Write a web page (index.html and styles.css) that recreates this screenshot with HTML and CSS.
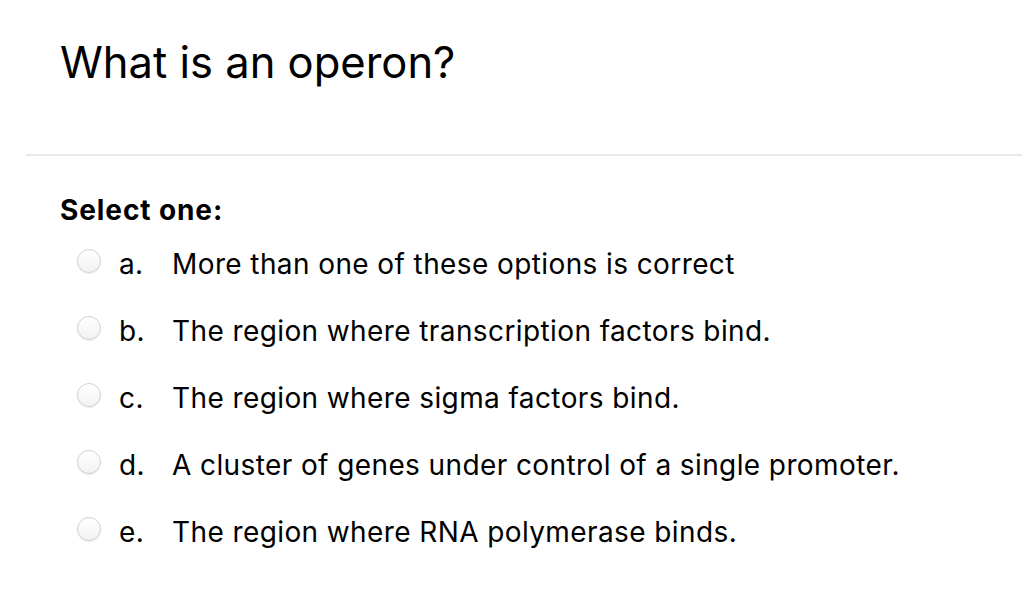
FILE: index.html
```html
<!DOCTYPE html>
<html>
<head>
<meta charset="utf-8">
<link rel="stylesheet" href="styles.css">
</head>
<body>
<div class="page">
  <h1 class="question">What is an operon?</h1>
  <div class="divider"></div>
  <div class="answers">
    <div class="prompt">Select one:</div>
    <div class="options">
      <label class="option"><span class="radio"></span><span class="letter">a.</span><span class="text">More than one of these options is correct</span></label>
      <label class="option"><span class="radio"></span><span class="letter">b.</span><span class="text">The region where transcription factors bind.</span></label>
      <label class="option"><span class="radio"></span><span class="letter">c.</span><span class="text">The region where sigma factors bind.</span></label>
      <label class="option"><span class="radio"></span><span class="letter">d.</span><span class="text">A cluster of genes under control of a single promoter.</span></label>
      <label class="option"><span class="radio"></span><span class="letter">e.</span><span class="text">The region where RNA polymerase binds.</span></label>
    </div>
  </div>
</div>
</body>
</html>
```

FILE: styles.css
```css
html, body {
  margin: 0;
  padding: 0;
  background: #ffffff;
}
.page {
  font-family: Inter, "Liberation Sans", sans-serif;
  color: #000000;
  display: flex;
  flex-direction: column;
}
.question {
  margin: 0;
  padding: 37px 0 0 60px;
  height: 116px;
  box-sizing: border-box;
  font-size: 43.5px;
  font-weight: 400;
  line-height: 50px;
  letter-spacing: 0;
}
.divider {
  margin-left: 26px;
  height: 2px;
  background: #e8e8ed;
  margin-top: 38px;
}
.answers {
  padding: 36px 0 0 60px;
}
.prompt {
  font-size: 28px;
  font-weight: 700;
  line-height: 36px;
  letter-spacing: 0.9px;
}
.options {
  display: flex;
  flex-direction: column;
  padding-left: 17px;
  margin-top: 2px;
}
.option {
  display: flex;
  align-items: center;
  height: 67px;
  font-size: 28px;
  letter-spacing: 0.4px;
}
.radio {
  width: 22px;
  height: 22px;
  border-radius: 50%;
  border: 1px solid #d0d0d3;
  background: linear-gradient(#ffffff, #f2f2f4);
  box-shadow: 0 1px 1px rgba(0,0,0,0.08);
  flex: 0 0 auto;
  margin-bottom: 5px;
}
.letter {
  width: 53px;
  margin-left: 18px;
  flex: 0 0 auto;
}
```
